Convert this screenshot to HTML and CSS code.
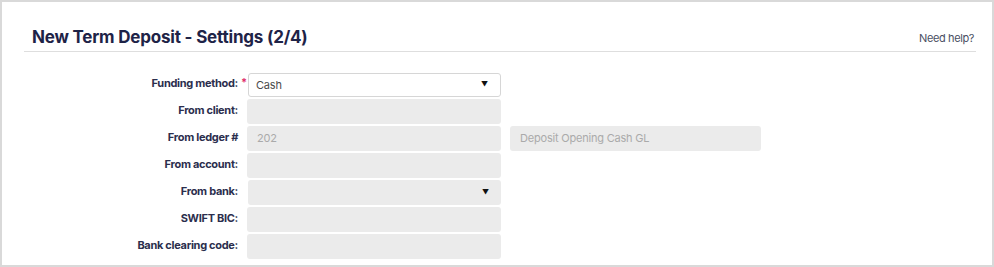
FILE: index.html
```html
<!DOCTYPE html>
<html lang="en">
<head>
    <meta charset="UTF-8">
    <meta name="viewport" content="width=device-width, initial-scale=1.0">
    <title>New Term Deposit</title>
    <link rel="stylesheet" href="styles.css">
</head>
<body>
    <div class="frame">
        <div class="header">
            <h1 class="title">New Term Deposit - Settings (2/4)</h1>
            <a class="help" href="#">Need help?</a>
        </div>

        <div class="form">
            <label class="label">Funding method:</label>
            <span class="req">*</span>
            <div class="field select">Cash<span class="caret">&#9660;</span></div>
            <div class="extra"></div>

            <label class="label">From client:</label>
            <span class="req"></span>
            <div class="field disabled"></div>
            <div class="extra"></div>

            <label class="label">From ledger #</label>
            <span class="req"></span>
            <div class="field disabled">202</div>
            <div class="field disabled wide">Deposit Opening Cash GL</div>

            <label class="label">From account:</label>
            <span class="req"></span>
            <div class="field disabled"></div>
            <div class="extra"></div>

            <label class="label">From bank:</label>
            <span class="req"></span>
            <div class="field disabled select"><span class="caret">&#9660;</span></div>
            <div class="extra"></div>

            <label class="label">SWIFT BIC:</label>
            <span class="req"></span>
            <div class="field disabled"></div>
            <div class="extra"></div>

            <label class="label">Bank clearing code:</label>
            <span class="req"></span>
            <div class="field disabled"></div>
            <div class="extra"></div>
        </div>
    </div>
</body>
</html>
```

FILE: styles.css
```css
* {
    padding: 0;
    margin: 0;
    box-sizing: border-box;
}
body {
    font-family: Inter, "Liberation Sans", sans-serif;
    background: #fff;
}
.frame {
    width: 994px;
    height: 267px;
    border: 2px solid #d9d9d9;
    background: #fff;
    overflow: hidden;
}
.header {
    display: flex;
    justify-content: space-between;
    align-items: flex-end;
    margin: 24px 16px 0 22px;
    padding: 0 2px 3px 8px;
    border-bottom: 1px solid #dedede;
}
.title {
    font-size: 17px;
    font-weight: 700;
    color: #1e2347;
    letter-spacing: -0.2px;
    line-height: 22px;
}
.help {
    font-size: 11px;
    color: #4a4f63;
    text-decoration: none;
    letter-spacing: -0.4px;
    line-height: 14px;
    margin-bottom: 3px;
}
.form {
    display: grid;
    grid-template-columns: 236px 9px 254px 260px;
    grid-auto-rows: 25px;
    row-gap: 2px;
    margin-top: 20px;
    align-items: center;
}
.label {
    text-align: right;
    font-size: 11px;
    font-weight: 700;
    color: #2b2e4d;
    letter-spacing: -0.3px;
    align-self: start;
    padding-top: 4px;
}
.req {
    color: #e0306a;
    font-size: 11px;
    font-weight: 700;
    padding-left: 3px;
    align-self: start;
    padding-top: 3px;
}
.field {
    height: 25px;
    border-radius: 3px;
    font-size: 11px;
    line-height: 25px;
    padding: 0 10px;
    color: #4a4a4a;
    letter-spacing: -0.2px;
}
.select {
    display: flex;
    justify-content: space-between;
    align-items: center;
    padding-right: 12px;
    height: 24px;
    border: 1px solid #d6d6d6;
    background: #fff;
    line-height: 22px;
    padding-left: 7px;
    margin-left: 1px;
}
.disabled {
    background: #ebebeb;
    border: none;
    color: #aaaaaa;
    height: 25px;
}
.select.disabled {
    padding-left: 10px;
}
.caret {
    font-size: 7px;
    color: #111;
    margin-left: auto;
}
.wide {
    margin-left: 9px;
}
```
